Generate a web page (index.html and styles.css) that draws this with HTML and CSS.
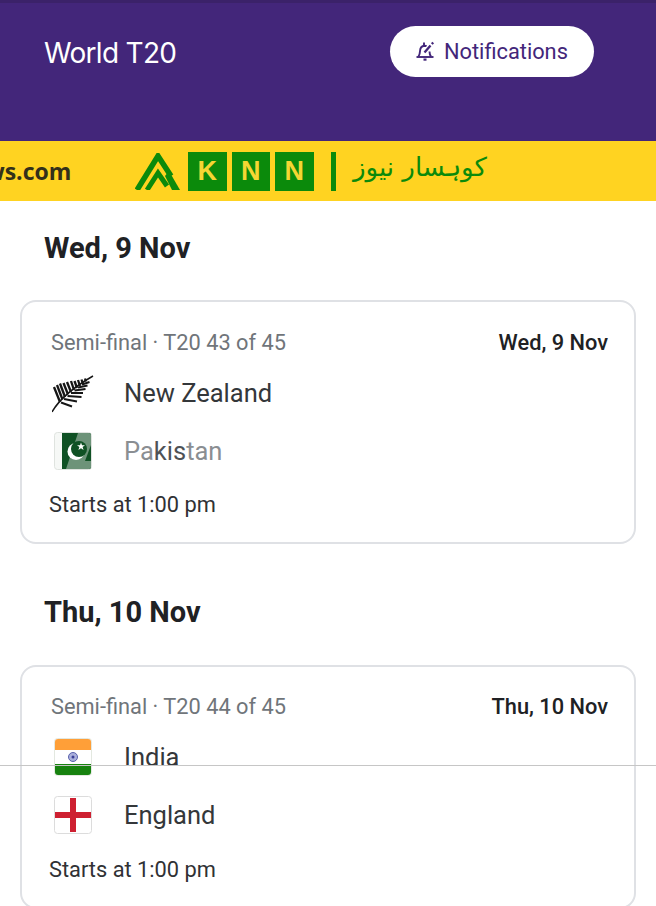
FILE: index.html
```html
<!DOCTYPE html>
<html>

<head>
    <title>World T20</title>
    <link rel="stylesheet" href="styles.css">
</head>

<body>
    <header class="header">
        <div class="header-row">
            <h1 class="title">World T20</h1>
            <button class="notify-button">
                <svg class="bell" width="20" height="22" viewBox="0 0 20 22" fill="none" stroke="#43267a" stroke-width="1.9">
                    <path d="M3.500 15.500c1.200-1.700 1.400-3.200 1.500-5.200C5.100 7 7 5 9.500 4.800c.8 0 1.500.1 2.100.4" />
                    <path d="M9 1.500v3.300" />
                    <path d="M14.500 10.500c0 2 .4 3.500 1.500 5" />
                    <path d="M1.500 16h17" />
                    <path d="M8.500 18.600h3" stroke-width="2.200" />
                    <path d="M9.500 11.500l6-7" stroke-width="2.300" />
                    <path d="M16.800 3l1.400-1.600" stroke-width="2.300" />
                </svg>
                <span>Notifications</span>
            </button>
        </div>
    </header>

    <div class="banner">
        <span class="banner-url">ws.com</span>
        <div class="banner-logo">
            <svg class="peaks" width="46" height="37" viewBox="0 0 46 37" fill="none" stroke="#0b8a0b">
                <path d="M2 37L23 3l13 20" stroke-width="5.500" />
                <path d="M12 37l11-17 9 13" stroke-width="5" />
                <path d="M30 23l4-5 11 19h-8z" fill="#0b8a0b" stroke="none" />
            </svg>
            <span class="tile">K</span>
            <span class="tile">N</span>
            <span class="tile">N</span>
            <span class="banner-bar"></span>
            <span class="urdu" lang="ur" dir="rtl">کوہسار نیوز</span>
        </div>
    </div>

    <main class="schedule">
        <h2 class="day">Wed, 9 Nov</h2>
        <section class="card">
            <div class="card-top">
                <span class="stage">Semi-final · T20 43 of 45</span>
                <span class="card-date">Wed, 9 Nov</span>
            </div>
            <div class="team">
                <svg class="flag" width="44" height="40" viewBox="0 0 44 40" fill="none" stroke="#161616">
                    <path d="M0 39C8 25 22 14 41 3" stroke-width="1.500" />
                    <g stroke-width="2.300">
                        <path d="M8 29L2 14" />
                        <path d="M10.500 26.500L5 12" />
                        <path d="M13 24L8 10.500" />
                        <path d="M16 21.500L11.500 10" />
                        <path d="M19 19L15 9" />
                        <path d="M22 17L19 8" />
                        <path d="M25 15L22.500 8" />
                        <path d="M28 13L26 7" />
                        <path d="M31 11L29.500 6.500" />
                        <path d="M34 8.500L33 5.500" />
                    </g>
                    <g stroke-width="2">
                        <path d="M9 29.500l11 4" />
                        <path d="M12 26l13 2.500" />
                        <path d="M15.500 23l14 1" />
                        <path d="M19 20l12 0" />
                        <path d="M22.500 17.500l11-1.500" />
                        <path d="M26 14.500l9.500-2" />
                        <path d="M30 11.500l7.500-2.500" />
                    </g>
                </svg>
                <span class="team-name">New Zealand</span>
            </div>
            <div class="team">
                <svg class="flag" width="44" height="40" viewBox="0 0 44 40">
                    <rect x="2.500" y="1.500" width="37" height="37" rx="3" fill="#f6f8f6" stroke="#dfe3df" />
                    <path d="M10 2h27a2 2 0 0 1 2 2v32a2 2 0 0 1-2 2H10z" fill="#0f5124" />
                    <path d="M26 2h11a2 2 0 0 1 2 2v32a2 2 0 0 1-2 2H14z" fill="#6d9379" />
                    <path d="M39 14l-6 16h6z" fill="#0f5124" />
                    <circle cx="24" cy="20.500" r="8.500" fill="#fff" />
                    <circle cx="27" cy="18" r="8" fill="#0f5124" />
                    <path d="M29 11.500l1 2.800 3 0-2.400 1.800 1 2.900-2.600-1.800-2.600 1.800 1-2.900-2.400-1.800 3 0z" fill="#fff" />
                </svg>
                <span class="team-name faded">Pa<span class="faded-mid">kis</span>tan</span>
            </div>
            <div class="start">Starts at 1:00 pm</div>
        </section>

        <h2 class="day">Thu, 10 Nov</h2>
        <section class="card card-next">
            <div class="card-top">
                <span class="stage">Semi-final · T20 44 of 45</span>
                <span class="card-date">Thu, 10 Nov</span>
            </div>
            <div class="team">
                <svg class="flag" width="44" height="40" viewBox="0 0 44 40">
                    <rect x="2.500" y="1.500" width="37" height="37" rx="3" fill="#fff" stroke="#e3e8e0" />
                    <path d="M3 13V5a3 3 0 0 1 3-3h30a3 3 0 0 1 3 3v8z" fill="#ff9f38" />
                    <path d="M3 27h36v8a3 3 0 0 1-3 3H6a3 3 0 0 1-3-3z" fill="#17820f" />
                    <circle cx="21" cy="20" r="4.500" fill="#aab0dc" stroke="#5a62ad" />
                    <circle cx="21" cy="20" r="1.500" fill="#3a3f96" />
                </svg>
                <span class="team-name">India</span>
            </div>
            <div class="team">
                <svg class="flag" width="44" height="40" viewBox="0 0 44 40">
                    <rect x="2.500" y="1.500" width="37" height="37" rx="3" fill="#fff" stroke="#dcdcdc" />
                    <path d="M18 3h6v34h-6z" fill="#ce2031" />
                    <path d="M3 17h36v6H3z" fill="#ce2031" />
                </svg>
                <span class="team-name">England</span>
            </div>
            <div class="start">Starts at 1:00 pm</div>
        </section>
    </main>

    <div class="hairline"></div>
</body>

</html>
```

FILE: styles.css
```css
html,
body {
    margin: 0;
    padding: 0;
}

body {
    position: relative;
    height: 906px;
    overflow: hidden;
    background: #fff;
    font-family: Roboto, "Liberation Sans", sans-serif;
    color: #202124;
}

/* CSS for the purple header */
.header {
    height: 141px;
    box-sizing: border-box;
    padding: 26px 62px 0 44px;
    background: #43267a;
    border-top: 3px solid #3b2269;
}

.header-row {
    display: flex;
    justify-content: space-between;
    align-items: center;
    margin-top: -3px;
}

.title {
    margin: 2px 0 0;
    font-family: Inter, Roboto, sans-serif;
    font-size: 28px;
    font-weight: 400;
    letter-spacing: -0.7px;
    color: #fff;
}

.notify-button {
    display: flex;
    align-items: center;
    gap: 9px;
    width: 204px;
    height: 51px;
    box-sizing: border-box;
    padding: 0 0 0 25px;
    border: none;
    border-radius: 26px;
    background: #fff;
    color: #43267a;
    font-family: Roboto, sans-serif;
    font-size: 21.800px;
}

/* CSS for the advert banner */
.banner {
    display: flex;
    align-items: center;
    height: 60px;
    overflow: hidden;
    background: #ffd321;
}

.banner-url {
    width: 150px;
    margin-left: -17px;
    padding-left: 2px;
    flex: none;
    font-family: "Open Sans", sans-serif;
    font-size: 23px;
    font-weight: 700;
    color: #33301a;
}

.banner-logo {
    display: flex;
    align-items: center;
}

.peaks {
    margin-right: 7px;
}

.tile {
    width: 38.500px;
    height: 39px;
    margin-right: 5px;
    background: #0b8a0b;
    color: #f5d633;
    font-family: "Liberation Sans", sans-serif;
    font-size: 27px;
    font-weight: 700;
    line-height: 39px;
    text-align: center;
}

.banner-bar {
    width: 5px;
    height: 39px;
    margin: 0 17px 0 12.500px;
    background: #0b8a0b;
}

.urdu {
    font-family: "DejaVu Sans", sans-serif;
    font-size: 26px;
    color: #0b8a0b;
    line-height: 40px;
    margin-top: -8px;
}

/* CSS for the match list */
.schedule {
    padding: 0 20px;
}

.day {
    margin: 0;
    padding: 31px 0 36px 24px;
    font-size: 29px;
    font-weight: 700;
    line-height: 32px;
    color: #202124;
}

.card + .day {
    padding-top: 52px;
    padding-bottom: 37px;
}

.card {
    height: 244px;
    box-sizing: border-box;
    padding: 27px 26px 0 29px;
    border: 2px solid #dfe1e5;
    border-radius: 16px;
}

.card-next {
    padding-top: 26px;
}

.card-top {
    display: flex;
    justify-content: space-between;
    align-items: center;
    margin-bottom: 8px;
    line-height: 27px;
}

.stage {
    font-size: 21.800px;
    color: #70757a;
}

.card-date {
    font-size: 21.800px;
    font-weight: 500;
    color: #202124;
}

.team {
    display: flex;
    align-items: center;
    height: 58px;
}

.flag {
    flex: none;
    margin-left: 1px;
    margin-right: 28px;
}

.team-name {
    font-size: 25.500px;
    color: #34373a;
}

.faded {
    color: #8a8e92;
}

.faded-mid {
    color: #4e5256;
}

.start {
    margin-top: 11px;
    margin-left: -2px;
    font-size: 21.800px;
    line-height: 27px;
    color: #303134;
}

.card-next .start {
    margin-top: 12px;
}

.hairline {
    position: absolute;
    left: 0;
    right: 0;
    top: 765px;
    height: 1px;
    background: #c6c6c6;
}
```
